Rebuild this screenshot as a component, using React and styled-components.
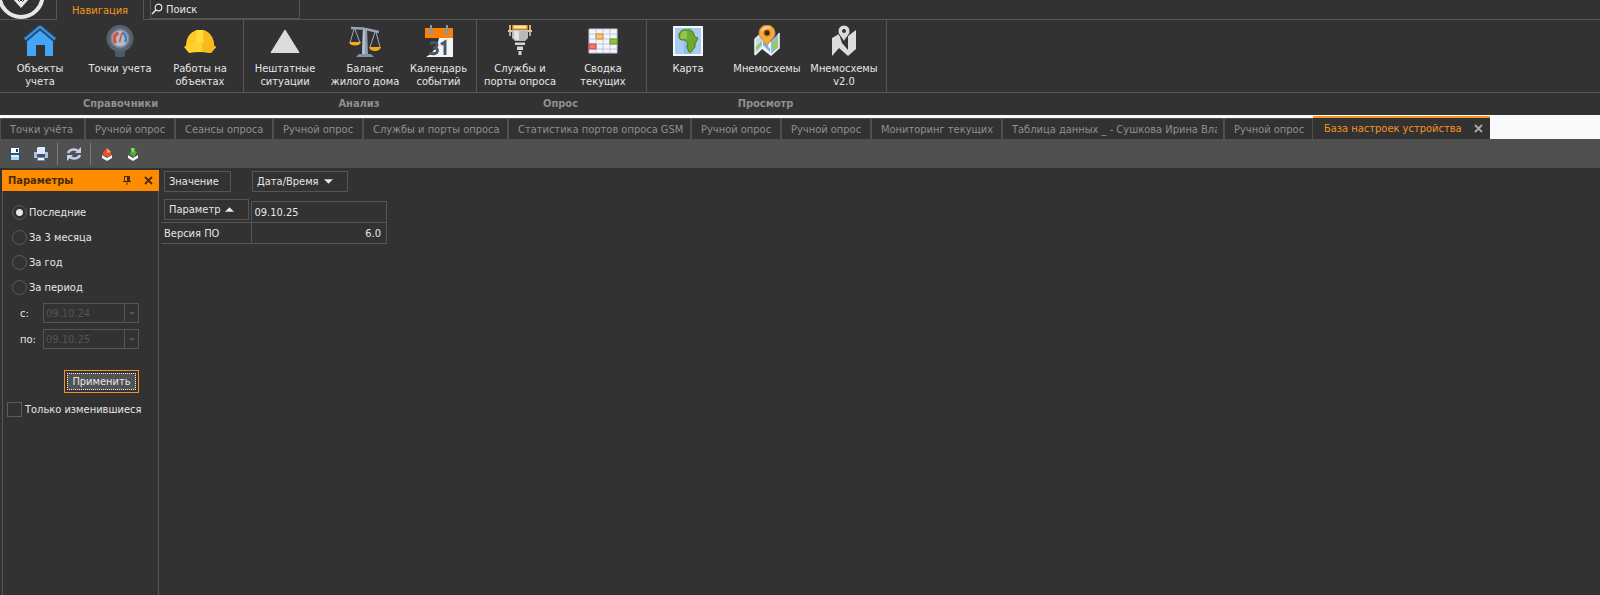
import React, { useState } from "react";
import styled, { createGlobalStyle, css } from "styled-components";

const color = {
  bg: "#323232",
  bar: "#505050",
  line: "#555555",
  text: "#e6e6e6",
  muted: "#8f8f8f",
  disabled: "#555555",
  accent: "#f7941d",
  header: "#ff8c00",
};

const GlobalStyle = createGlobalStyle`
  *, *::before, *::after { box-sizing: border-box; }
  body { margin: 0; background: ${color.bg}; }
  body, button, input {
    font-family: "DejaVu Sans Condensed", "DejaVu Sans", sans-serif;
    font-size: 11px;
    line-height: 13px;
    color: ${color.text};
  }
  button { margin: 0; padding: 0; border: 0; background: none; cursor: pointer; }
`;

const Page = styled.div`
  display: flex;
  flex-direction: column;
  min-height: 100vh;
`;

/* ---------- top bar ---------- */

const TopBar = styled.header`
  display: flex;
  height: 20px;
`;

const LogoCell = styled.div`
  width: 57px;
  overflow: hidden;
  border-right: 1px solid ${color.line};
  border-bottom: 1px solid ${color.line};
  svg { display: block; }
`;

const NavTab = styled.button`
  width: 87px;
  color: ${color.accent};
  border-right: 1px solid ${color.line};
`;

const TopRest = styled.div`
  flex: 1;
  display: flex;
  padding-left: 6px;
  border-bottom: 1px solid ${color.line};
`;

const SearchBox = styled.label`
  display: flex;
  align-items: center;
  gap: 3px;
  width: 150px;
  border: solid ${color.line};
  border-width: 0 1px 1px;
`;

const SearchInput = styled.input`
  flex: 1;
  min-width: 0;
  padding: 0;
  border: 0;
  outline: 0;
  background: none;
  &::placeholder { color: ${color.text}; opacity: 1; }
`;

/* ---------- ribbon ---------- */

const Ribbon = styled.nav`
  display: flex;
  height: 95px;
`;

const Group = styled.section`
  display: flex;
  flex-direction: column;
`;

const GroupButtons = styled.div`
  flex: 1;
  display: flex;
  padding-right: 3px;
  border-right: 1px solid ${color.line};
  border-bottom: 1px solid ${color.line};
`;

const GroupCaption = styled.h2`
  margin: 0;
  height: 22px;
  padding-right: 3px;
  font-size: 11px;
  line-height: 21px;
  text-align: center;
  color: ${color.muted};
`;

const RibbonFill = styled.div`
  flex: 1;
  height: 73px;
  border-bottom: 1px solid ${color.line};
`;

const RibbonButton = styled.button`
  display: flex;
  flex-direction: column;
  align-items: center;
  gap: 5px;
  width: ${(p) => p.$width}px;
  padding-top: 5px;
  white-space: pre;
  svg { display: block; flex: none; }
`;

/* ---------- document tabs ---------- */

const TabStrip = styled.div`
  display: flex;
  align-items: flex-end;
  height: 24px;
  background: #fafafc;
`;

const Tab = styled.button`
  flex: none;
  width: ${(p) => p.$width}px;
  height: 21px;
  padding: 0 6px 0 9px;
  border: solid ${color.bar};
  border-width: 1px 1px 0;
  background: ${color.bg};
  color: ${color.muted};
  text-align: left;
  white-space: nowrap;
`;

const TabText = styled.span`
  display: block;
  overflow: hidden;
`;

const ActiveTab = styled.div`
  display: flex;
  flex: none;
  align-items: center;
  justify-content: space-between;
  height: 23px;
  width: 177px;
  padding: 0 6px 0 11px;
  border-top: 2px solid ${color.accent};
  background: ${color.bg};
`;

const ActiveTabLabel = styled.button`
  color: ${color.accent};
`;

const IconButton = styled.button`
  display: flex;
  align-items: center;
  justify-content: center;
  width: ${(p) => p.$size || 16}px;
  height: ${(p) => p.$size || 16}px;
  color: ${(p) => p.$color || "#a8a8a8"};
`;

/* ---------- toolbar ---------- */

const Toolbar = styled.div`
  display: flex;
  align-items: center;
  gap: 10px;
  height: 29px;
  padding-left: 7px;
  background: ${color.bar};
`;

const ToolSplit = styled.i`
  width: 1px;
  height: 22px;
  margin: 0 -2px;
  background: #7b7b7b;
`;

/* ---------- parameters panel ---------- */

const Workspace = styled.main`
  flex: 1;
  display: flex;
  padding: 2px 0 0 2px;
`;

const Panel = styled.aside`
  flex: none;
  width: 157px;
  border: solid ${color.line};
  border-width: 0 1px;
`;

const PanelHeader = styled.header`
  display: flex;
  align-items: center;
  height: 21px;
  margin: 0 -1px;
  padding: 0 3px 0 6px;
  background: ${color.header};
  gap: 5px;
`;

const PanelTitle = styled.h1`
  flex: 1;
  margin: 0;
  font-size: 11px;
  line-height: 13px;
  color: #4a2c00;
`;

const Options = styled.form`
  display: flex;
  flex-direction: column;
  padding: 9px 4px 0;
`;

const Choice = styled.label`
  display: flex;
  align-items: center;
  gap: 2px;
  height: 25px;
  padding-left: 5px;
`;

const Radio = styled.input`
  appearance: none;
  width: 15px;
  height: 15px;
  margin: 0;
  border: 1px solid #5c5c5c;
  border-radius: 50%;
  &:checked { background: radial-gradient(circle, #e6e6e6 3px, transparent 4px); }
`;

const DateRow = styled.div`
  display: flex;
  align-items: center;
  height: 26px;
  padding-left: 13px;
`;

const DateLabel = styled.label`
  width: 23px;
`;

const DateBox = styled.div`
  display: flex;
  width: 96px;
  height: 20px;
  border: 1px solid ${color.disabled};
`;

const DateInput = styled.input`
  flex: 1;
  min-width: 0;
  padding: 0 2px;
  border: 0;
  background: none;
  color: ${color.disabled};
`;

const DropButton = styled.button`
  display: flex;
  align-items: center;
  justify-content: center;
  width: 14px;
  border-left: 1px solid ${color.disabled};
  color: ${color.disabled};
`;

const ApplyButton = styled.button`
  align-self: flex-end;
  width: 75px;
  height: 23px;
  margin: 18px 15px 4px 0;
  padding: 2px;
  border: 1px solid ${color.accent};
  background: ${color.bg};
`;

const ApplyFace = styled.span`
  display: block;
  height: 17px;
  line-height: 15px;
  border: 1px dotted #f0f0f0;
  background: #505254;
`;

const CheckChoice = styled.label`
  display: flex;
  align-items: center;
  gap: 3px;
  height: 25px;
  white-space: nowrap;
`;

const Check = styled.input`
  appearance: none;
  flex: none;
  width: 15px;
  height: 15px;
  margin: 0;
  border: 1px solid #5c5c5c;
  &:checked { background: #e6e6e6; }
`;

/* ---------- pivot grid ---------- */

const Pivot = styled.section`
  flex: 1;
  padding: 1px 0 0 2px;
`;

const FieldRow = styled.div`
  display: flex;
  gap: 21px;
  height: 30px;
  padding-left: 3px;
`;

const Field = styled.button`
  display: flex;
  align-items: center;
  gap: 5px;
  width: ${(p) => p.$width}px;
  height: 21px;
  padding: 0 4px;
  border: 1px solid ${color.line};
`;

const Grid = styled.table`
  border-collapse: collapse;
  table-layout: fixed;
  width: 226px;
`;

const cell = css`
  height: 21px;
  font-weight: normal;
  border: 1px solid ${color.line};
`;

/* The row field is taller than its header row and rises above it. */
const Corner = styled.th`
  width: 90px;
  height: 21px;
  padding: 0 0 0 3px;
  vertical-align: top;
  & > button { margin-top: -3px; }
`;

const ColumnHead = styled.th`
  ${cell}
  padding: 0 3px;
  text-align: left;
`;

const RowHead = styled.th`
  ${cell}
  padding: 0 3px;
  border-left: 0;
  text-align: left;
`;

const Value = styled.td`
  ${cell}
  padding: 1px 5px 0;
  text-align: right;
`;

/* ---------- icons ---------- */

const Logo = () => (
  <svg width="56" height="19" viewBox="0 0 56 19">
    <circle cx="21" cy="-4.500" r="21.500" fill="none" stroke="#e8e8e8" strokeWidth="4" />
    <path d="M12-2L21 8L30-2Z" fill="#e8e8e8" />
    <path d="M18 0l1.500 1.500 1.500-1.500 1.500 1.500 1.500-1.500" stroke="#323232" fill="none" />
  </svg>
);

const SearchIcon = () => (
  <svg width="12" height="12" viewBox="0 0 12 12" fill="none" stroke="#e6e6e6">
    <circle cx="7.500" cy="4.500" r="3.300" strokeWidth="1.200" />
    <path d="M5 7L1 11" strokeWidth="1.600" />
  </svg>
);

const icons = {
  house: (
    <>
      <path d="M3 15L16 4L29 15V31H21V20H12V31H3Z" fill="#42a5f5" />
      <path d="M1 14.500L16 1.500L31 14.500" stroke="#3a8fd8" strokeWidth="3" fill="none" />
      <path d="M0 13L16 0L32 13" stroke="#1f5f9c" strokeWidth="1" fill="none" />
      <path d="M1 17L16 4.500L31 17" stroke="#22405c" strokeWidth="1.500" fill="none" />
    </>
  ),
  meter: (
    <>
      <path d="M11 22H21V30Q21 32 19 32H13Q11 32 11 30Z" fill="#4b5a69" />
      <circle cx="16" cy="13.500" r="13.500" fill="#56626f" />
      <circle cx="16" cy="13.500" r="10" fill="#76828f" />
      <circle cx="16" cy="13.500" r="8" fill="#aebccb" />
      <path d="M14.500 8A6 6 0 0 0 12 18" stroke="#d9513a" strokeWidth="3" fill="none" />
      <path d="M18 7.500A6.500 6.500 0 0 1 21 17" stroke="#3f7fc0" strokeWidth="2.500" fill="none" />
      <path d="M18 8L15.500 17" stroke="#e5482d" strokeWidth="1.500" />
    </>
  ),
  helmet: (
    <>
      <path d="M2 21C2 10 9 6 13 5H19C24 6 30 11 30 21Z" fill="#ffc928" />
      <path d="M13 5H19L20 20H12Z" fill="#ffdd3c" />
      <path d="M19 5C25 7 30 12 30 21L20 20Z" fill="#fbb91d" />
      <path d="M0 22L4 19Q16 16 28 19L32 22L27 28Q16 26 5 28Z" fill="#ffd02e" />
      <path d="M18 18Q25 18 28 19L32 22L27 28L19 27Z" fill="#f9b71e" />
    </>
  ),
  triangle: <path d="M16 5L30 27.500H2Z" fill="#dcdcdc" stroke="#dcdcdc" strokeLinejoin="round" />,
  scales: (
    <>
      <path d="M14 3H18L19 29H13Z" fill="#8f9bb0" />
      <path d="M14 3H16V29H13Z" fill="#b4becd" />
      <path d="M2 3L14 3.500L30 7" stroke="#98a4b6" strokeWidth="2.500" fill="none" />
      <path d="M10 29H22L25 32H7Z" fill="#8592a6" />
      <path d="M5 4L1 18M6 4L11 18M26 7L21 22M27 7L31 22" stroke="#9fabbd" />
      <path d="M0 17H12Q11 20.500 6 20.500T0 17ZM20 22H32Q31 26 26 26T20 22Z" fill="#f7ab1c" />
    </>
  ),
  calendar: (
    <>
      <path d="M2 3H30V13H2Z" fill="#fb8005" />
      <path d="M16 13H30V32H3Q14 26 16 13Z" fill="#f2f4f6" />
      <g stroke="#8b98a0" strokeWidth="2" fill="none">
        <path d="M8 0V6M24 0V6" /><circle cx="8" cy="7" r="1.500" /><circle cx="24" cy="7" r="1.500" />
      </g>
      <g fill="none" stroke="#46586a" strokeWidth="3">
        <path d="M7 18.500Q14 16 14 20Q14 22.500 10 23Q15 23 14.500 26Q13.500 30 6 28" />
        <path d="M18 19.500L22 17V30" />
      </g>
    </>
  ),
  port: (
    <>
      <path d="M6 0V6M26 0V6" stroke="#f0b040" strokeWidth="2" />
      <path d="M9 0H23V4H9Z" fill="#ffe7ab" stroke="#e6a437" strokeWidth="1.500" />
      <path d="M4 5H28V7H4Z" fill="#c7c7c7" />
      <path d="M5 7H7V11H5ZM25 7H27V11H25Z" fill="#aaa" />
      <path d="M8 6H24V13L21 16H11L8 13Z" fill="#b9b9b9" />
      <path d="M10 6H15V15H12L10 13Z" fill="#e4e4e4" />
      <path d="M11 17H21V20H11ZM13 21H19V25H13ZM14.500 26H17.500V30H14.500Z" fill="#d4d4d4" />
      <path d="M11 17.500H21M13 21.500H19" stroke="#868686" />
    </>
  ),
  sheet: (
    <>
      <path d="M2 4H30V28H2Z" fill="#f4f7fd" stroke="#c3c9d8" />
      <path d="M9 4V28M16 4V28M23 4V28M2 9H30M2 14H30M2 19H30M2 24H30" stroke="#bfc5d8" />
      <path d="M9 9H16V14H9Z" fill="#ffc271" stroke="#d88a26" />
      <path d="M23 14H30V19H23Z" fill="#90c63d" stroke="#659824" />
      <path d="M2 19H9V24H2Z" fill="#f2776c" stroke="#c9463d" />
    </>
  ),
  map: (
    <>
      <path d="M2 2H30V30H2Z" fill="#8fbce4" stroke="#f3f7fb" strokeWidth="2" />
      <path d="M3 3H12V29H3ZM20 3H29V29H20Z" fill="#a8cdee" />
      <path d="M7 9L10 5H18L21 7L23 12L26 13L23 19V22L19 27H17L15 22L16 18L13 15H9L7 13Z" fill="#6fa82c" stroke="#4b7d1f" />
      <path d="M9 9L11 6H15V14H10L8 12Z" fill="#92c54e" />
    </>
  ),
  places: (
    <>
      <path d="M4 14L11 8V23L4 30Z" fill="#bcdcf4" />
      <path d="M11 10L20 17V30L11 23Z" fill="#e8f1f9" />
      <path d="M20 16L28 8V23L20 30Z" fill="#8fbfe8" />
      <path d="M4 22L11 16V20L4 27ZM21 18L28 12V21L21 27Z" fill="#9cc46a" />
      <path d="M12 16L19 24V27L12 20Z" fill="#6fb0e0" />
      <path d="M4 14L11 8M4 30L11 23L20 30L28 23V8M4 14V30" stroke="#f4f7fb" strokeWidth="1.500" fill="none" />
      <path d="M16 21C14 16 8 13 8 8A8 8 0 0 1 24 8C24 13 18 16 16 21Z" fill="#f5a93c" stroke="#c98a35" />
      <path d="M10 7A6 6 0 0 1 20 3Q14 3 10 7Z" fill="#ffd694" />
      <circle cx="16" cy="8" r="3" fill="#3b2d1b" stroke="#b66e14" />
    </>
  ),
  placesMono: (
    <>
      <path d="M4 13L11 9V23L4 31Z" fill="#dcdcdc" />
      <path d="M11 9L14 18L20 25V31L11 23Z" fill="#dcdcdc" />
      <path d="M20 11L28 5V24L20 31Z" fill="#dcdcdc" />
      <path d="M16 17C14 12 10 10 10 6A6 6 0 0 1 22 6C22 10 18 12 16 17Z" fill="#dcdcdc" stroke="#323232" />
      <circle cx="16" cy="6" r="2" fill="#323232" />
    </>
  ),
};

const RibbonIcon = ({ name }) => (
  <svg width="32" height="32" viewBox="0 0 32 32" aria-hidden="true">{icons[name]}</svg>
);

const toolIcons = {
  save: (
    <>
      <path d="M2 2H14V14H2Z" fill="#35506c" />
      <path d="M4 2H12V7H4Z" fill="#fff" />
      <path d="M9 3H11V6H9Z" fill="#26394f" />
      <path d="M4 9H12V14H4Z" fill="#d9f1fb" />
      <path d="M4 11H12V14H4Z" fill="#a9d8ee" />
    </>
  ),
  print: (
    <>
      <path d="M1 6H4V9H12V6H15V12H1Z" fill="#a9c0ea" />
      <path d="M5 1H12V8H4V2Z" fill="#dfe9fb" />
      <path d="M4 9H12V11H4Z" fill="#41557a" />
      <path d="M4.500 11.500H11.500V14.500H4.500Z" fill="#f5f9ff" stroke="#6d8abf" />
    </>
  ),
  refresh: (
    <g fill="none" stroke="#c3cfee" strokeWidth="2.500">
      <path d="M2 7A6 5 0 0 1 12 5M14 9A6 5 0 0 1 4 11" />
      <path d="M15 1V7H9ZM1 15V9H7Z" fill="#c3cfee" stroke="none" />
    </g>
  ),
  upload: (
    <>
      <path d="M3 9L8 12L13 9V12L8 15L3 12Z" fill="#f4f4f4" />
      <path d="M8 2L12 6V10L8 11L4 9V6Z" fill="#e8502a" />
      <path d="M8 2L12 6L8 7Z" fill="#ff9a62" />
    </>
  ),
  download: (
    <>
      <path d="M3 9L8 12L13 9V12L8 15L3 12Z" fill="#f4f4f4" />
      <path d="M6 2L10 2V5L12 6L9 11L4 7L6 6Z" fill="#44b92f" />
      <path d="M6 2H9V6H7Z" fill="#7de05c" />
    </>
  ),
};

const ToolIcon = ({ name }) => (
  <svg width="16" height="16" viewBox="0 0 16 16" aria-hidden="true">{toolIcons[name]}</svg>
);

const CloseIcon = () => (
  <svg width="9" height="9" viewBox="0 0 9 9" stroke="currentColor" strokeWidth="1.800">
    <path d="M1 1L8 8M8 1L1 8" />
  </svg>
);

const PinIcon = () => (
  <svg width="8" height="9" viewBox="0 0 8 9" fill="currentColor">
    <path d="M1 0H7V5H8V6H4.500V9H3.500V6H0V5H1ZM2 1V5H4V1Z" />
  </svg>
);

const Arrow = ({ up, small }) => (
  <svg width={small ? 6 : 9} height={small ? 3 : 5} viewBox="0 0 10 5" fill="currentColor">
    <path d={up ? "M0 5L5 0L10 5Z" : "M0 0L5 5L10 0Z"} />
  </svg>
);

/* ---------- data ---------- */

const groups = [
  { caption: "Справочники", items: [
    ["house", "Объекты\nучета", 80],
    ["meter", "Точки учета", 80],
    ["helmet", "Работы на\nобъектах", 80],
  ] },
  { caption: "Анализ", items: [
    ["triangle", "Нештатные\nситуации", 82],
    ["scales", "Баланс\nжилого дома", 78],
    ["calendar", "Календарь\nсобытий", 69],
  ] },
  { caption: "Опрос", items: [
    ["port", "Службы и\nпорты опроса", 86],
    ["sheet", "Сводка\nтекущих", 80],
  ] },
  { caption: "Просмотр", items: [
    ["map", "Карта", 82],
    ["places", "Мнемосхемы", 76],
    ["placesMono", "Мнемосхемы\nv2.0", 78],
  ] },
];

const tabs = [
  ["Точки учёта", 85],
  ["Ручной опрос", 90],
  ["Сеансы опроса", 98],
  ["Ручной опрос", 90],
  ["Службы и порты опроса", 145],
  ["Статистика портов опроса GSM", 183],
  ["Ручной опрос", 90],
  ["Ручной опрос", 90],
  ["Мониторинг текущих", 131],
  ["Таблица данных _ - Сушкова Ирина Вла", 222],
  ["Ручной опрос", 89],
];

const periods = ["Последние", "За 3 месяца", "За год", "За период"];

const DateField = ({ id, label, value }) => (
  <DateRow>
    <DateLabel htmlFor={id}>{label}</DateLabel>
    <DateBox>
      <DateInput id={id} defaultValue={value} disabled />
      <DropButton type="button" disabled aria-label="Выбрать дату"><Arrow small /></DropButton>
    </DateBox>
  </DateRow>
);

export default function App() {
  const [period, setPeriod] = useState(periods[0]);

  return (
    <Page>
      <GlobalStyle />
      <TopBar>
        <LogoCell><Logo /></LogoCell>
        <NavTab>Навигация</NavTab>
        <TopRest>
          <SearchBox>
            <SearchIcon />
            <SearchInput placeholder="Поиск" aria-label="Поиск" />
          </SearchBox>
        </TopRest>
      </TopBar>

      <Ribbon>
        {groups.map((g) => (
          <Group key={g.caption}>
            <GroupButtons>
              {g.items.map(([icon, label, width]) => (
                <RibbonButton key={label} $width={width}>
                  <RibbonIcon name={icon} />
                  {label}
                </RibbonButton>
              ))}
            </GroupButtons>
            <GroupCaption>{g.caption}</GroupCaption>
          </Group>
        ))}
        <RibbonFill />
      </Ribbon>

      <TabStrip>
        {tabs.map(([label, width], i) => (
          <Tab key={i} $width={width}><TabText>{label}</TabText></Tab>
        ))}
        <ActiveTab>
          <ActiveTabLabel>База настроек устройства</ActiveTabLabel>
          <IconButton $size={12} aria-label="Закрыть вкладку"><CloseIcon /></IconButton>
        </ActiveTab>
      </TabStrip>

      <Toolbar>
        <IconButton aria-label="Сохранить"><ToolIcon name="save" /></IconButton>
        <IconButton aria-label="Печать"><ToolIcon name="print" /></IconButton>
        <ToolSplit />
        <IconButton aria-label="Обновить"><ToolIcon name="refresh" /></IconButton>
        <ToolSplit />
        <IconButton aria-label="Выгрузить"><ToolIcon name="upload" /></IconButton>
        <IconButton aria-label="Загрузить"><ToolIcon name="download" /></IconButton>
      </Toolbar>

      <Workspace>
        <Panel>
          <PanelHeader>
            <PanelTitle>Параметры</PanelTitle>
            <IconButton $color="#4a2c00" aria-label="Закрепить"><PinIcon /></IconButton>
            <IconButton $color="#4a2c00" aria-label="Закрыть панель"><CloseIcon /></IconButton>
          </PanelHeader>
          <Options onSubmit={(e) => e.preventDefault()}>
            {periods.map((p) => (
              <Choice key={p}>
                <Radio type="radio" name="period" checked={period === p} onChange={() => setPeriod(p)} />
                {p}
              </Choice>
            ))}
            <DateField id="from" label="с:" value="09.10.24" />
            <DateField id="to" label="по:" value="09.10.25" />
            <ApplyButton><ApplyFace>Применить</ApplyFace></ApplyButton>
            <CheckChoice>
              <Check type="checkbox" />
              Только изменившиеся
            </CheckChoice>
          </Options>
        </Panel>

        <Pivot>
          <FieldRow>
            <Field $width={67}>Значение</Field>
            <Field $width={96}>Дата/Время <Arrow /></Field>
          </FieldRow>
          <Grid>
            <thead>
              <tr>
                <Corner scope="col"><Field $width={85}>Параметр <Arrow up /></Field></Corner>
                <ColumnHead scope="col">09.10.25</ColumnHead>
              </tr>
            </thead>
            <tbody>
              <tr>
                <RowHead scope="row">Версия ПО</RowHead>
                <Value>6.0</Value>
              </tr>
            </tbody>
          </Grid>
        </Pivot>
      </Workspace>
    </Page>
  );
}
